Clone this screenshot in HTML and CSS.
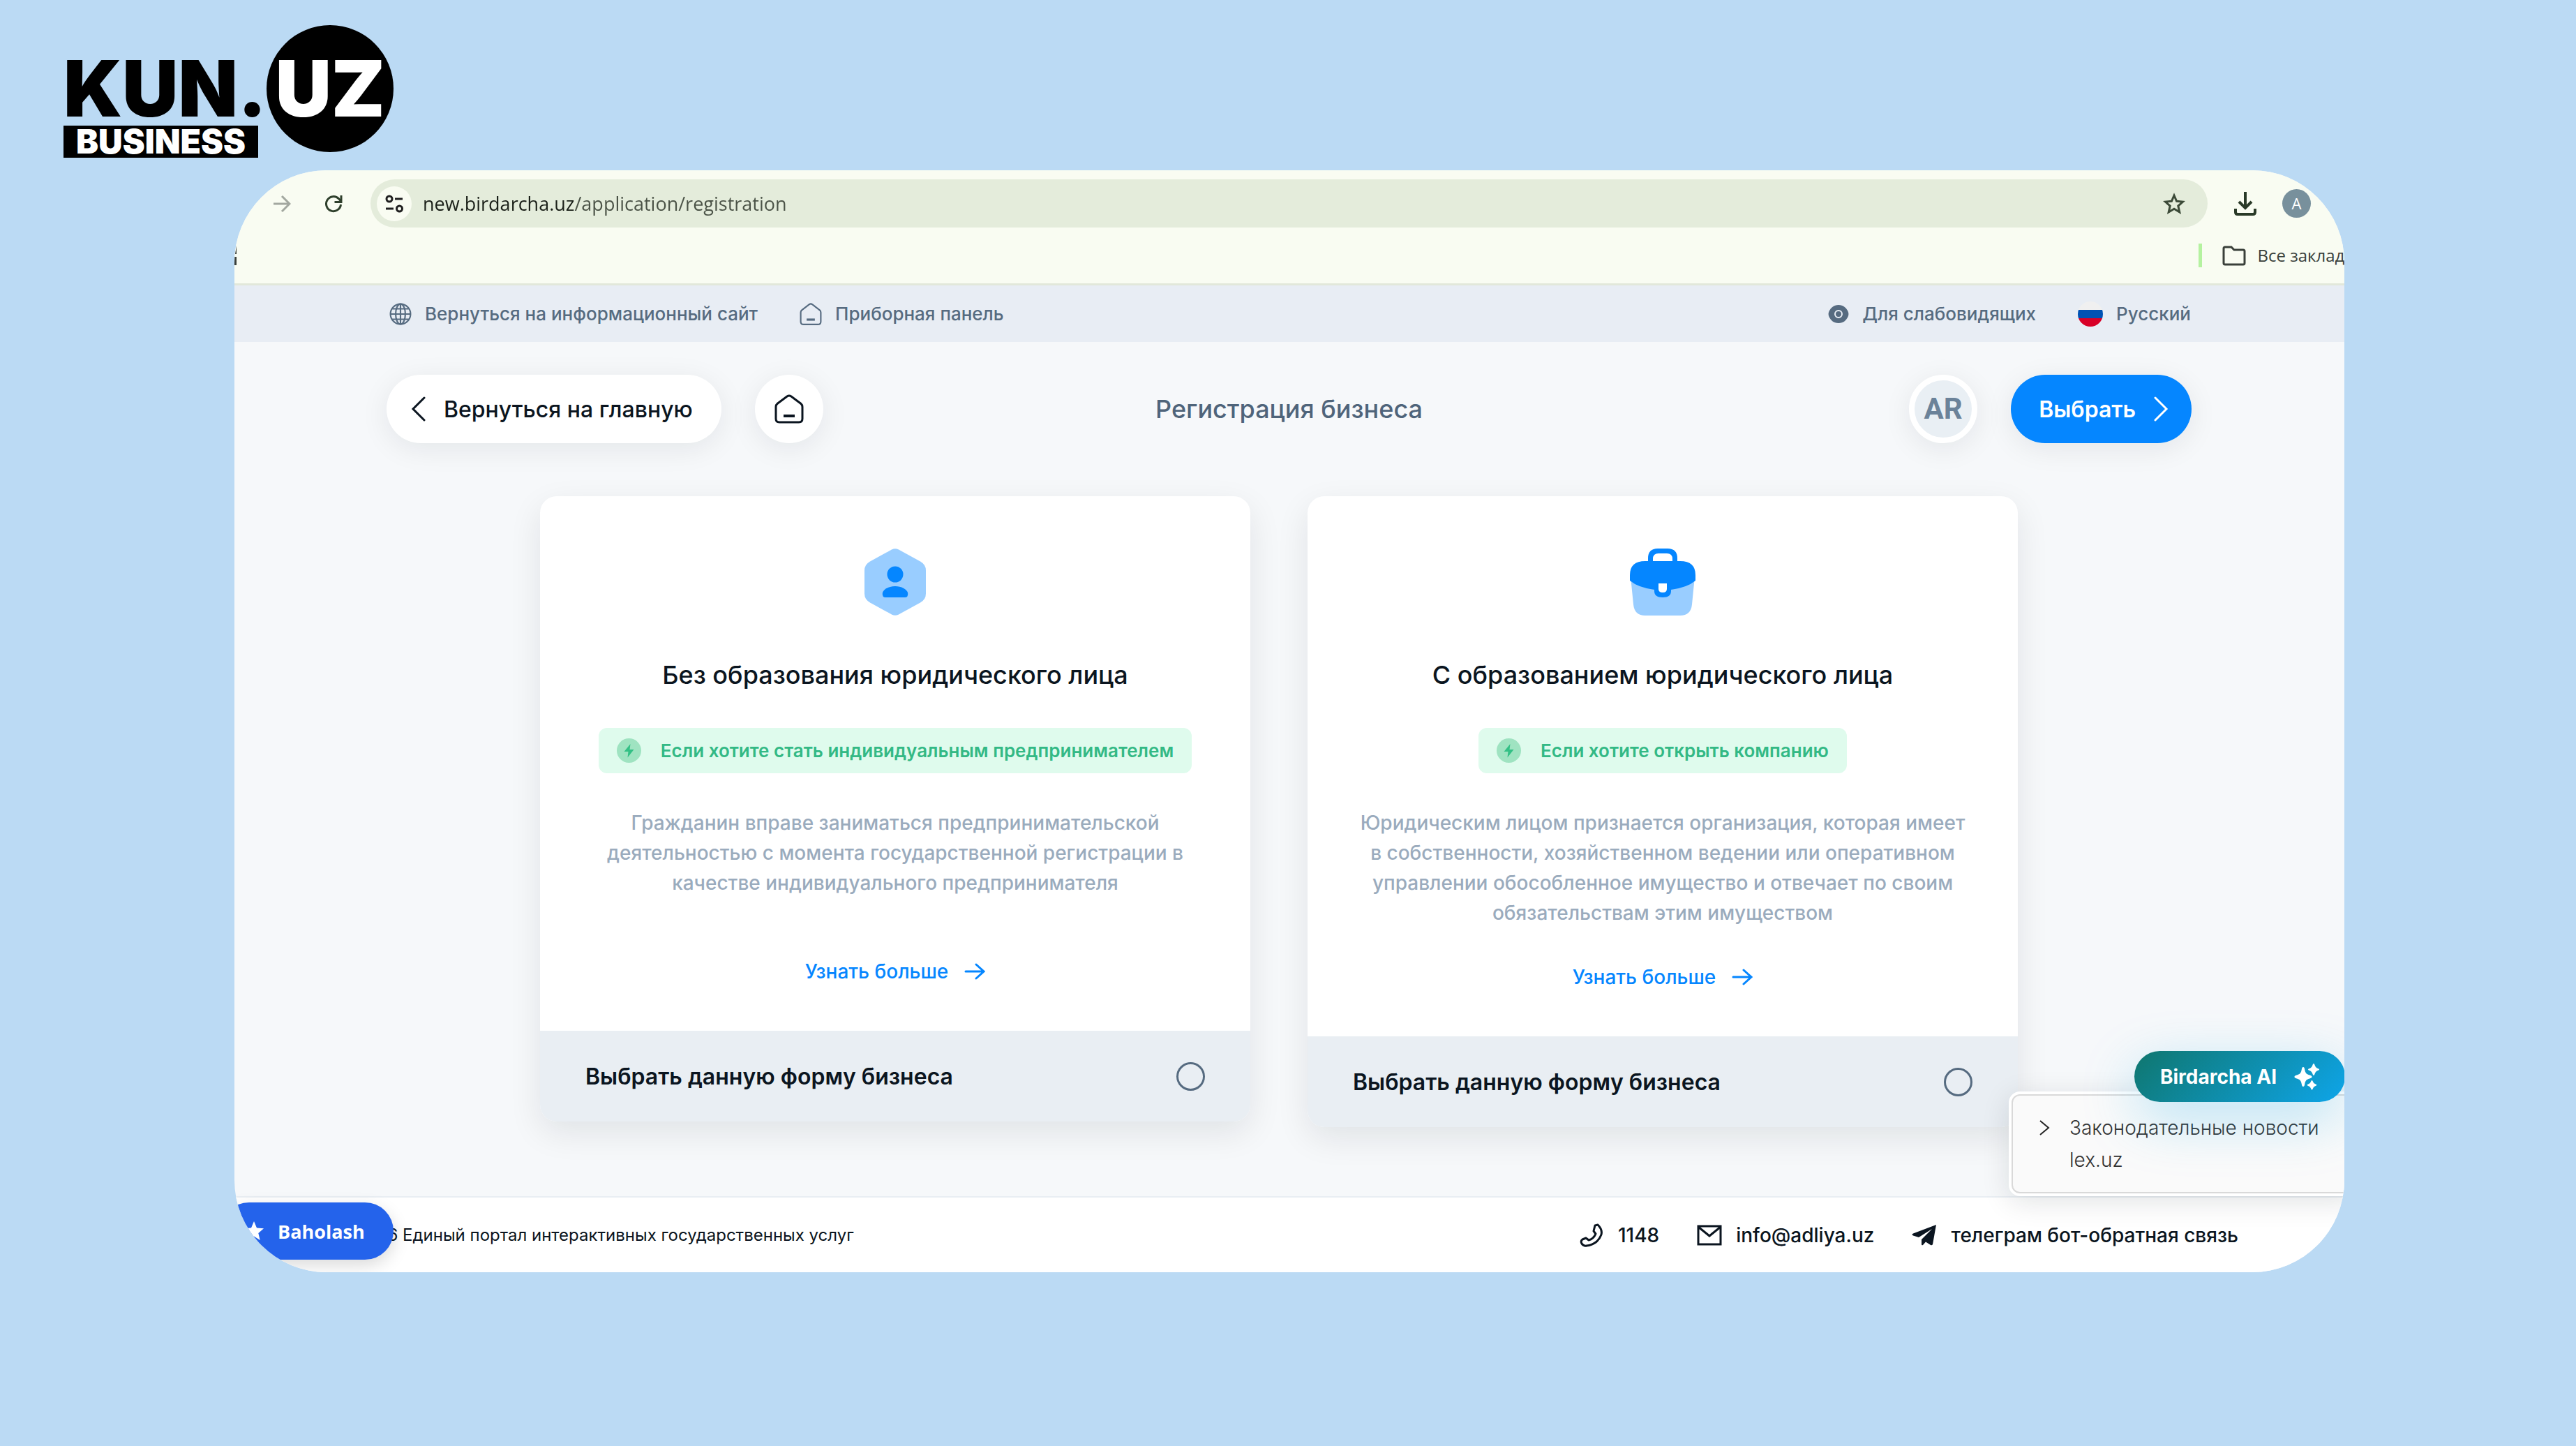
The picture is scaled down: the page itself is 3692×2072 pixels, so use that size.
FILE: index.html
```html
<!DOCTYPE html>
<html lang="ru">
<head>
    <meta charset="UTF-8">
    <meta name="viewport" content="width=device-width, initial-scale=1.0">
    <title>Регистрация бизнеса</title>
    <link rel="stylesheet" href="styles.css">
</head>
<body>
    <header class="brand">
        <div class="brand-left">
            <span class="brand-name">KUN.</span>
            <span class="brand-tag">BUSINESS</span>
        </div>
        <span class="brand-circle">UZ</span>
    </header>

    <div class="window">
        <!-- browser bar -->
        <div class="browser">
            <div class="browser-row">
                <button class="icon-btn" aria-label="Вперёд">
                    <svg width="26" height="26" viewBox="0 0 26 26" fill="none" stroke="#a3a8a0" stroke-width="3"><path d="M1 13h23M13 2l11 11-11 11"/></svg>
                </button>
                <button class="icon-btn reload" aria-label="Обновить">
                    <svg width="26" height="26" viewBox="0 0 26 26" fill="none" stroke="#2f402c" stroke-width="3"><path d="M23.500 14A10.500 10.500 0 1 1 20.500 5.700L23.500 9"/><path d="M24 1v9.500h-9.500"/></svg>
                </button>
                <div class="address">
                    <span class="site-info">
                        <svg width="26" height="26" viewBox="0 0 26 26" fill="none" stroke="#1f1f1f" stroke-width="3"><circle cx="6" cy="6" r="4"/><path d="M14 6h11M1 20h11"/><circle cx="20.500" cy="20" r="4"/></svg>
                    </span>
                    <input class="url" type="text" aria-label="Адрес" value="new.birdarcha.uz/application/registration">
                    <button class="icon-btn" aria-label="Добавить в закладки">
                        <svg width="32" height="32" viewBox="0 0 32 32" fill="none" stroke="#3c4a38" stroke-width="3"><path d="M16 4l3.600 8.300 9 .8-6.800 6 2 8.900L16 23.300 8.200 28l2-8.900-6.800-6 9-.8z"/></svg>
                    </button>
                </div>
                <button class="icon-btn" aria-label="Загрузки">
                    <svg width="32" height="36" viewBox="0 0 32 36" fill="none" stroke="#2a3a28" stroke-width="4"><path d="M16 1v23M7 15l9 9 9-9M2 25v5q0 3 3 3h22q3 0 3-3v-5"/></svg>
                </button>
                <span class="profile">A</span>
            </div>
            <div class="bookmarks">
                <svg class="bookmark-cut" width="3" height="28" viewBox="0 0 3 28" fill="#3a3f3a"><path d="M3 0v12H1zM0 16h3v12H0z"/></svg>
                <a class="all-bookmarks" href="#">
                    <svg width="34" height="29" viewBox="0 0 34 29" fill="none" stroke="#3a403a" stroke-width="3"><path d="M4 2h9l4 4h13q2 0 2 2v17q0 2-2 2H4q-2 0-2-2V4q0-2 2-2z"/></svg>
                    Все закладки
                </a>
            </div>
        </div>

        <!-- site top bar -->
        <nav class="topbar">
            <div class="topbar-group">
                <a class="topbar-item" href="#">
                    <svg width="32" height="32" viewBox="0 0 30 30" fill="none" stroke="#566b80" stroke-width="2"><circle cx="15" cy="15" r="13.500"/><ellipse cx="15" cy="15" rx="6.500" ry="13.500"/><path d="M15 1v28M1 15h28M4 8h22M4 22h22"/></svg>
                    Вернуться на информационный сайт
                </a>
                <a class="topbar-item" href="#">
                    <svg width="32" height="32" viewBox="0 0 30 30" fill="none" stroke="#566b80" stroke-width="2"><path d="M1.500 13q0-2 1.500-3.200L13 2q2-1.500 4 0l10 7.800q1.500 1.200 1.500 3.200v12q0 4-4 4h-19q-4 0-4-4z"/><path d="M9.500 22.500h11" stroke-width="3"/></svg>
                    Приборная панель
                </a>
            </div>
            <div class="topbar-group">
                <button class="topbar-item">
                    <svg width="30" height="26" viewBox="0 0 30 26"><path d="M15 0c7 0 11 4 13.500 9q1.800 4 0 8C26 22 22 26 15 26S4 22 1.500 17q-1.800-4 0-8C4 4 8 0 15 0z" fill="#566b80"/><circle cx="15" cy="13" r="5" fill="none" stroke="#e8edf4" stroke-width="2"/></svg>
                    Для слабовидящих
                </button>
                <button class="topbar-item">
                    <svg width="36" height="36" viewBox="0 0 36 36"><clipPath id="flag"><circle cx="18" cy="18" r="18"/></clipPath><g clip-path="url(#flag)"><path fill="#f0f0f0" d="M0 0h36v12H0z"/><path fill="#0052b4" d="M0 12h36v12H0z"/><path fill="#d80027" d="M0 24h36v12H0z"/></g></svg>
                    Русский
                </button>
            </div>
        </nav>

        <main class="page">
            <div class="page-head">
                <div class="head-left">
                    <button class="pill">
                        <svg width="22" height="36" viewBox="0 0 22 36" fill="none" stroke="#0b1520" stroke-width="3" stroke-linecap="round"><path d="M19 2L3 18l16 16"/></svg>
                        Вернуться на главную
                    </button>
                    <button class="pill round" aria-label="Главная">
                        <svg width="42" height="42" viewBox="0 0 42 42" fill="none" stroke="#0b1520" stroke-width="3"><path d="M2 18q0-3 2.300-4.800L18 3q3-2 6 0l13.700 10.200Q40 15 40 18v17q0 5-5 5H7q-5 0-5-5z"/><path d="M13 31h16" stroke-width="4"/></svg>
                    </button>
                </div>
                <h1>Регистрация бизнеса</h1>
                <div class="head-right">
                    <span class="user">AR</span>
                    <button class="pill primary">
                        Выбрать
                        <svg width="22" height="36" viewBox="0 0 22 36" fill="none" stroke="#fff" stroke-width="3" stroke-linecap="round"><path d="M3 2l16 16L3 34"/></svg>
                    </button>
                </div>
            </div>

            <div class="cards">
                <section class="card">
                    <div class="card-body">
                        <svg width="88" height="96" viewBox="0 0 88 96"><path fill="#99cdff" d="M39 1.500q5-2.500 10 0l31 17q8 4.500 8 13v33q0 8.500-8 13l-31 17q-5 2.500-10 0l-31-17q-8-4.500-8-13v-33q0-8.500 8-13z"/><circle cx="44" cy="37" r="11.500" fill="#0586ff"/><path fill="#0586ff" d="M26 63c2-5 9-9 18-9s16 4 18 9q1 7-4 7H30q-5 0-4-7z"/></svg>
                        <h2>Без образования юридического лица</h2>
                        <p class="badge">
                            <svg width="35" height="35" viewBox="0 0 35 35"><circle cx="17.500" cy="17.500" r="17.500" fill="#9fe3c1"/><path fill="#33c085" d="M19.500 8L10.500 19h6l-1 8.500L24.500 16h-6z"/></svg>
                            Если хотите стать индивидуальным предпринимателем
                        </p>
                        <p class="text">Гражданин вправе заниматься предпринимательской деятельностью с момента государственной регистрации в качестве индивидуального предпринимателя</p>
                        <a class="more" href="#">
                            Узнать больше
                            <svg width="30" height="24" viewBox="0 0 30 24" fill="none" stroke="#0586ff" stroke-width="3" stroke-linecap="round"><path d="M2 12h26M17 2l11 10-11 10"/></svg>
                        </a>
                    </div>
                    <label class="card-foot">Выбрать данную форму бизнеса <input type="radio" name="form"></label>
                </section>

                <section class="card">
                    <div class="card-body">
                        <svg width="94" height="96" viewBox="0 0 94 96"><path fill="#99cdff" d="M1 40h92l-4 40q-1.500 16-17 16H22Q6.500 96 5 80z"/><path fill="#0586ff" d="M26 18v-4Q26 0 40 0h14q14 0 14 14v4h4q22 0 22 20v8Q82 56 59 59v2q0 9-12 9t-12-9v-2Q12 56 0 46v-8q0-20 22-20zm7 0h28v-3q0-8-8-8H41q-8 0-8 8z"/><path fill="#fff" d="M41 50h12v8q0 5-6 5t-6-5z"/></svg>
                        <h2>С образованием юридического лица</h2>
                        <p class="badge">
                            <svg width="35" height="35" viewBox="0 0 35 35"><circle cx="17.500" cy="17.500" r="17.500" fill="#9fe3c1"/><path fill="#33c085" d="M19.500 8L10.500 19h6l-1 8.500L24.500 16h-6z"/></svg>
                            Если хотите открыть компанию
                        </p>
                        <p class="text">Юридическим лицом признается организация, которая имеет в собственности, хозяйственном ведении или оперативном управлении обособленное имущество и отвечает по своим обязательствам этим имуществом</p>
                        <a class="more" href="#">
                            Узнать больше
                            <svg width="30" height="24" viewBox="0 0 30 24" fill="none" stroke="#0586ff" stroke-width="3" stroke-linecap="round"><path d="M2 12h26M17 2l11 10-11 10"/></svg>
                        </a>
                    </div>
                    <label class="card-foot">Выбрать данную форму бизнеса <input type="radio" name="form"></label>
                </section>
            </div>
        </main>

        <footer class="footer">
            <p class="copyright">2026 Единый портал интерактивных государственных услуг</p>
            <a class="contact" href="tel:1148">
                <svg width="36" height="34" viewBox="0 0 36 34" fill="none" stroke="#0b1520" stroke-width="3" stroke-linejoin="round"><path d="M23 3l4-1q7 7 5 14C29 25 21 31 11 32q-4 1-7-3-2-4 1-6l5-2 4 3q7-2 10-9l-3-4z"/></svg>
                1148
            </a>
            <a class="contact" href="mailto:info@adliya.uz">
                <svg width="36" height="30" viewBox="0 0 36 30" fill="none" stroke="#0b1520" stroke-width="3"><path d="M2 2h32v26H2zM2 3l16 13L34 3"/></svg>
                info@adliya.uz
            </a>
            <a class="contact" href="#">
                <svg width="36" height="30" viewBox="0 0 36 30" fill="#0b1520"><path d="M35 0L30 28q-1 2-3 1l-7-4.500-4 4.500q-2 1-2-1v-7L29 6 10 18l-8-2.500q-3-1.500 0-3z"/></svg>
                телеграм бот-обратная связь
            </a>
        </footer>

        <aside class="news">
            <details class="news-inner">
                <summary>
                    <svg width="16" height="22" viewBox="0 0 16 22" fill="none" stroke="#222" stroke-width="2"><path d="M2 1l12 10L2 21"/></svg>
                    <span>Законодательные новости lex.uz</span>
                </summary>
            </details>
        </aside>
        <button class="ai">
            Birdarcha AI
            <svg width="36" height="38" viewBox="0 0 36 38" fill="#fff"><path d="M13 5c1.500 0 1.800 1.500 2.200 3.500 1 5 2 6.500 7 8 2 .6 3.300 1 3.300 2.500s-1.300 1.900-3.300 2.500c-5 1.500-6 3-7 8-.4 2-.7 3.500-2.200 3.500s-1.800-1.500-2.200-3.500c-1-5-2-6.500-7-8C1.800 20.900.500 20.500.500 19s1.300-1.900 3.300-2.500c5-1.500 6-3 7-8C11.200 6.500 11.500 5 13 5z"/><path d="M28 0q1 0 1.500 2 1 4 5 5.200 1.500.3 1.500 1.300t-1.500 1.300q-4 1.200-5 5.200-.5 2-1.500 2t-1.500-2q-1-4-5-5.200Q20 9.500 20 8.500t1.500-1.300q4-1.200 5-5.200.5-2 1.500-2z"/><path d="M25.500 24q1 0 1.300 1.500.8 3.200 4 4 1.500.4 1.500 1.300t-1.500 1.300q-3.200.8-4 4-.3 1.500-1.300 1.500t-1.300-1.500q-.8-3.200-4-4-1.500-.4-1.500-1.300t1.500-1.300q3.200-.8 4-4 .3-1.500 1.300-1.500z"/></svg>
        </button>
        <button class="rate">
            <svg width="28" height="28" viewBox="0 0 28 28" fill="#fff"><path d="M14 0l4 9.500 10 .8-7.700 6.600L22.700 27 14 21.600 5.300 27l2.400-10.100L0 10.300l10-.8z"/></svg>
            Baholash
        </button>
    </div>
</body>
</html>
```
FILE: styles.css
```css
* {
    box-sizing: border-box;
}
body {
    margin: 0;
    min-height: 100vh;
    background-color: #bbdaf4;
    font-family: "Inter", sans-serif;
    color: #0b1520;
}
a {
    color: inherit;
    text-decoration: none;
}
button {
    border: none;
    background: none;
    padding: 0;
    color: inherit;
    font: inherit;
    cursor: pointer;
}
svg {
    display: block;
    flex-shrink: 0;
}
h1, h2, p {
    margin: 0;
}

/* logo */
.brand {
    display: flex;
    align-items: flex-start;
    height: 244px;
    padding: 36px 91px 0;
    color: #000;
    font-weight: 900;
}
.brand-left {
    display: flex;
    flex-direction: column;
    align-items: flex-start;
    gap: 8px;
    padding-top: 46px;
}
.brand-name {
    font-size: 111px;
    line-height: 90px;
}
.brand-tag {
    padding: 0 18px;
    background-color: #000;
    color: #fff;
    font-size: 48px;
    line-height: 46px;
}
.brand-circle {
    display: flex;
    justify-content: center;
    align-items: center;
    width: 182px;
    height: 182px;
    border-radius: 50%;
    background-color: #000;
    color: #fff;
    font-size: 111px;
    line-height: 90px;
}

/* rounded window */
.window {
    position: relative;
    overflow: hidden;
    margin: 0 332px 0 336px;
    border-radius: 132px;
    background-color: #f6f8fa;
}
.browser {
    padding-top: 13px;
    border-bottom: 3px solid #e2e8da;
    background-color: #f9fcf2;
    font-family: "Open Sans", sans-serif;
}
.browser-row {
    display: flex;
    align-items: center;
    padding: 0 48px 0 55px;
}
.reload {
    margin: 0 40px 0 48px;
}
.address {
    display: flex;
    flex: 1;
    align-items: center;
    gap: 16px;
    height: 69px;
    margin-right: 38px;
    padding: 0 32px 0 9px;
    border-radius: 35px;
    background-color: #e4ecdb;
}
.site-info {
    display: flex;
    justify-content: center;
    align-items: center;
    width: 50px;
    height: 50px;
    border-radius: 50%;
    background-color: #f9fcf2;
}
/* the host is darker than the path */
.url {
    flex: 1;
    padding: 0;
    border: none;
    background: linear-gradient(90deg, #1a1f18 216px, #4a5246 216px);
    background-clip: text;
    -webkit-background-clip: text;
    color: transparent;
    font-family: inherit;
    font-size: 27px;
}
.profile {
    width: 41px;
    margin-left: 37px;
    border-radius: 50%;
    background-color: #78909c;
    color: #fff;
    font-size: 22px;
    line-height: 41px;
    text-align: center;
}
.bookmarks {
    display: flex;
    justify-content: space-between;
    align-items: center;
    height: 80px;
}
.all-bookmarks {
    display: flex;
    align-items: center;
    gap: 16px;
    margin-right: -28px;
    padding-left: 29px;
    border-left: 5px solid #b5f2a0;
    color: #3a403a;
    font-size: 24px;
    line-height: 34px;
    white-space: nowrap;
}

/* site top bar */
.topbar {
    display: flex;
    justify-content: space-between;
    align-items: center;
    height: 81px;
    padding: 0 220px 0 222px;
    background-color: #e8edf4;
    color: #566b80;
    font-size: 26px;
    font-weight: 500;
}
.topbar-group {
    display: flex;
    gap: 60px;
}
.topbar-item {
    display: flex;
    align-items: center;
    gap: 19px;
}

/* page */
.page {
    padding: 47px 219px 99px 218px;
}
.page-head {
    display: grid;
    grid-template-columns: 1fr auto 1fr;
    align-items: center;
}
.page-head h1 {
    color: #4f647a;
    font-size: 36px;
    font-weight: 500;
}
.head-left, .head-right {
    display: flex;
    gap: 48px;
}
.head-right {
    justify-content: flex-end;
}
.pill {
    display: flex;
    align-items: center;
    gap: 25px;
    height: 98px;
    padding: 0 41px 0 35px;
    border-radius: 49px;
    background-color: #fff;
    box-shadow: 0 8px 40px rgba(11, 21, 32, 0.08);
    font-size: 32px;
    font-weight: 500;
}
.round {
    justify-content: center;
    width: 98px;
    padding: 0;
}
.primary {
    padding: 0 33px 0 40px;
    background-color: #0586ff;
    color: #fff;
    font-weight: 600;
}
.user {
    width: 98px;
    border: 8px solid #fff;
    border-radius: 50%;
    background-color: #e9eff4;
    box-shadow: 0 8px 40px rgba(11, 21, 32, 0.08);
    color: #6b8299;
    font-family: "Roboto", sans-serif;
    font-size: 42px;
    font-weight: 700;
    line-height: 82px;
    text-align: center;
}

/* cards */
.cards {
    display: flex;
    align-items: flex-start;
    gap: 82px;
    margin-top: 76px;
    padding: 0 249px 0 220px;
}
.card {
    flex: 1;
    overflow: hidden;
    border-radius: 24px;
    background-color: #fff;
    box-shadow: 0 16px 48px rgba(11, 21, 32, 0.09);
}
.card-body {
    display: flex;
    flex-direction: column;
    align-items: center;
    padding: 75px 64px 65px;
}
.card h2 {
    margin: 61px 0 52px;
    font-size: 36px;
    font-weight: 500;
    line-height: 48px;
}
.badge {
    display: flex;
    align-items: center;
    gap: 28px;
    height: 65px;
    padding: 0 26px;
    border-radius: 12px;
    background-color: #dffbed;
    color: #33b985;
    font-size: 26px;
    font-weight: 600;
}
.text {
    min-height: 164px;
    margin: 50px 0;
    color: #9aabbd;
    font-size: 28px;
    font-weight: 500;
    line-height: 43px;
    text-align: center;
}
.more {
    display: flex;
    align-items: center;
    gap: 23px;
    color: #0586ff;
    font-size: 28px;
    font-weight: 500;
    line-height: 40px;
}
.card-foot {
    display: flex;
    justify-content: space-between;
    align-items: center;
    height: 130px;
    padding: 0 65px;
    background-color: #e9eef3;
    font-size: 32px;
    font-weight: 600;
}
.card-foot input {
    appearance: none;
    width: 41px;
    height: 41px;
    margin: 0;
    border: 3px solid #566b80;
    border-radius: 50%;
}
.card-foot input:checked {
    border: 12px solid #0586ff;
}

/* footer */
.footer {
    display: flex;
    align-items: center;
    gap: 54px;
    height: 109px;
    padding: 0 152px 0 175px;
    border-top: 2px solid #e9eef3;
    background-color: #fff;
}
.copyright {
    margin-right: auto;
    font-size: 24px;
}
.contact {
    display: flex;
    align-items: center;
    gap: 20px;
    font-size: 28px;
    font-weight: 500;
}

/* floating widgets, partly outside the window */
.news {
    position: absolute;
    right: -20px;
    bottom: 109px;
    width: 501px;
    padding: 4px;
    border-radius: 16px;
    background-color: #fff;
    box-shadow: 0 8px 40px rgba(11, 21, 32, 0.12);
}
.news-inner {
    padding: 23px 28px 23px 37px;
    border: 2px solid #d9d9d9;
    border-radius: 12px;
    background-color: #fafafa;
}
.news summary {
    display: flex;
    gap: 28px;
    color: #333;
    font-size: 28px;
    font-weight: 300;
    line-height: 46px;
    list-style: none;
}
.news svg {
    margin-top: 12px;
}
.ai {
    position: absolute;
    right: -1px;
    bottom: 244px;
    display: flex;
    align-items: center;
    gap: 25px;
    height: 73px;
    padding: 0 37px;
    border-radius: 37px;
    background: linear-gradient(135deg, #0f766e, #0ea5e9);
    box-shadow: 0 24px 80px rgba(14, 165, 233, 0.28);
    color: #fff;
    font-size: 28px;
    font-weight: 700;
}
.rate {
    position: absolute;
    left: -20px;
    bottom: 18px;
    display: flex;
    align-items: center;
    gap: 20px;
    height: 82px;
    padding: 0 41px 0 34px;
    border-radius: 41px;
    background-color: #2463eb;
    box-shadow: 0 8px 24px rgba(0, 0, 0, 0.15);
    color: #fff;
    font-family: "Open Sans", sans-serif;
    font-size: 27px;
    font-weight: 700;
}
```
